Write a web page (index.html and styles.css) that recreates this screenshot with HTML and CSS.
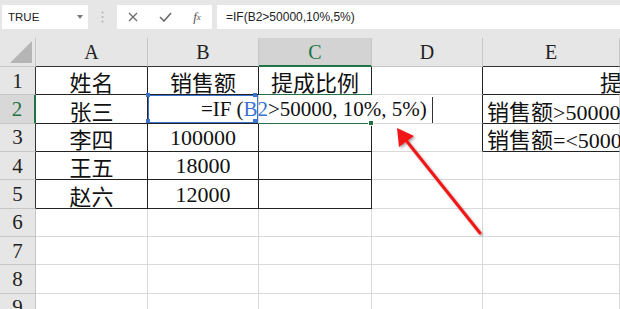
FILE: index.html
```html
<!DOCTYPE html>
<html lang="zh-CN">
<head>
    <meta charset="UTF-8">
    <title>提成比例</title>
    <link rel="stylesheet" href="styles.css">
</head>
<body>
<div class="app">
    <div class="toolbar">
        <div class="namebox">
            <span>TRUE</span>
            <span class="caret"></span>
        </div>
        <div class="grip">
            <svg width="3" height="12" viewBox="0 0 3 12"><circle cx="1.5" cy="1.5" r="1" fill="#b0b0b0"/><circle cx="1.5" cy="6" r="1" fill="#b0b0b0"/><circle cx="1.5" cy="10.5" r="1" fill="#b0b0b0"/></svg>
        </div>
        <div class="buttons">
            <span class="btn cancel">
                <svg width="10" height="10" viewBox="0 0 10 10"><path d="M1 1 L9 9 M9 1 L1 9" stroke="#6a6a6a" stroke-width="1.3"/></svg>
            </span>
            <span class="btn enter">
                <svg width="13" height="10" viewBox="0 0 13 10"><path d="M1 5 L5 9 L12 1" fill="none" stroke="#6a6a6a" stroke-width="1.6"/></svg>
            </span>
            <span class="btn fx">f<sub>x</sub></span>
        </div>
        <div class="formula">=IF(B2&gt;50000,10%,5%)</div>
    </div>

    <div class="sheet">
        <div class="cell corner"></div>
        <div class="cell col-head dark-bottom">A</div>
        <div class="cell col-head dark-bottom">B</div>
        <div class="cell col-head active">C</div>
        <div class="cell col-head">D</div>
        <div class="cell col-head dark-bottom">E</div>

        <div class="cell row-head dark-right">1</div>
        <div class="cell boxed">姓名</div>
        <div class="cell boxed">销售额</div>
        <div class="cell boxed green-bottom">提成比例</div>
        <div class="cell dark-right"></div>
        <div class="cell boxed-row title">提</div>

        <div class="cell row-head active-row">2</div>
        <div class="cell boxed">张三</div>
        <div class="cell range"></div>
        <div class="cell current"></div>
        <div class="cell dark-right"></div>
        <div class="cell boxed-row left">销售额&gt;50000</div>

        <div class="cell row-head dark-right">3</div>
        <div class="cell boxed">李四</div>
        <div class="cell boxed">100000</div>
        <div class="cell boxed"></div>
        <div class="cell dark-right"></div>
        <div class="cell boxed-row left">销售额=&lt;50000</div>

        <div class="cell row-head dark-right">4</div>
        <div class="cell boxed">王五</div>
        <div class="cell boxed">18000</div>
        <div class="cell boxed"></div>
        <div class="cell"></div>
        <div class="cell"></div>

        <div class="cell row-head dark-right">5</div>
        <div class="cell boxed">赵六</div>
        <div class="cell boxed">12000</div>
        <div class="cell boxed"></div>
        <div class="cell"></div>
        <div class="cell"></div>

        <div class="cell row-head">6</div>
        <div class="cell"></div><div class="cell"></div><div class="cell"></div><div class="cell"></div><div class="cell"></div>
        <div class="cell row-head">7</div>
        <div class="cell"></div><div class="cell"></div><div class="cell"></div><div class="cell"></div><div class="cell"></div>
        <div class="cell row-head">8</div>
        <div class="cell"></div><div class="cell"></div><div class="cell"></div><div class="cell"></div><div class="cell"></div>
        <div class="cell row-head">9</div>
        <div class="cell"></div><div class="cell"></div><div class="cell"></div><div class="cell"></div><div class="cell"></div>
    </div>

    <div class="editor">=IF<span class="paren">(</span><span class="ref">B2</span>&gt;50000, 10%, 5%)</div>

    <svg class="arrow" width="620" height="309" viewBox="0 0 620 309">
        <defs>
            <filter id="shadow" x="-20%" y="-20%" width="140%" height="140%">
                <feDropShadow dx="1.5" dy="1.5" stdDeviation="1.2" flood-color="#000" flood-opacity="0.35"/>
            </filter>
        </defs>
        <g filter="url(#shadow)">
            <line x1="480" y1="233" x2="405" y2="139" stroke="#f01818" stroke-width="3" stroke-linecap="round"/>
            <polygon points="397,128 399,147 414,136" fill="#f01818"/>
        </g>
    </svg>
</div>
</body>
</html>
```

FILE: styles.css
```css
body {
    margin: 0;
    background: #fff;
    font-family: "Liberation Serif", "Noto Sans CJK SC", serif;
    overflow: hidden;
}

.app {
    position: relative;
    width: 620px;
    height: 309px;
    overflow: hidden;
}

/* formula bar */
.toolbar {
    height: 38px;
    box-sizing: border-box;
    padding-top: 5px;
    background: #e6e6e6;
    display: flex;
    align-items: flex-start;
    font-family: "Liberation Sans", Arial, sans-serif;
}

.namebox {
    margin-left: 2px;
    width: 86px;
    height: 24px;
    box-sizing: border-box;
    padding: 0 5px 0 6px;
    background: #fff;
    display: flex;
    align-items: center;
    justify-content: space-between;
    font-size: 11.5px;
    color: #222;
}

.caret {
    width: 0;
    height: 0;
    border-left: 3px solid transparent;
    border-right: 3px solid transparent;
    border-top: 4px solid #777;
}

.grip {
    width: 29px;
    height: 24px;
    display: flex;
    align-items: center;
    justify-content: center;
}

.buttons {
    width: 95px;
    height: 24px;
    background: #fff;
    display: flex;
    align-items: center;
}

.btn {
    display: flex;
    justify-content: center;
    align-items: center;
}

.btn.cancel {
    width: 32px;
}

.btn.enter {
    width: 33px;
}

.btn.fx {
    width: 30px;
    font-family: "Liberation Serif", serif;
    font-style: italic;
    font-size: 13px;
    color: #555;
}

.btn.fx sub {
    font-size: 9px;
    vertical-align: -1px;
}

.formula {
    margin-left: 5px;
    flex: 1;
    height: 24px;
    box-sizing: border-box;
    padding-left: 9px;
    background: #fff;
    display: flex;
    align-items: center;
    font-size: 12px;
    color: #222;
}

/* grid */
.sheet {
    display: grid;
    grid-template-columns: 36px 112px 111px 113px 111px 1fr;
    grid-template-rows: 29px repeat(9, 28.35px);
}

.cell {
    box-sizing: border-box;
    border-right: 1px solid #d9d9d9;
    border-bottom: 1px solid #d9d9d9;
    display: flex;
    align-items: center;
    justify-content: center;
    white-space: nowrap;
    min-width: 0;
    font-size: 22px;
    color: #111;
    padding-top: 1px;
}

.corner {
    position: relative;
    background: #e6e6e6;
    border-color: #c6c6c6;
}

.corner::after {
    content: "";
    position: absolute;
    right: 3px;
    bottom: 3px;
    width: 0;
    height: 0;
    border-left: 22px solid transparent;
    border-bottom: 22px solid #b5b5b5;
}

.col-head {
    background: #e6e6e6;
    border-right-color: #c6c6c6;
    border-bottom-color: #c6c6c6;
    font-size: 20px;
    color: #222;
}

.col-head.dark-bottom {
    border-bottom-color: #333;
}

.col-head.active {
    background: #d3d3d3;
    color: #217346;
    border-bottom: 2px solid #217346;
}

.row-head {
    background: #e6e6e6;
    border-right-color: #c6c6c6;
    border-bottom-color: #c6c6c6;
    font-size: 21px;
    color: #222;
}

.row-head.dark-right {
    border-right-color: #333;
}

.row-head.active-row {
    background: #d8d8d8;
    color: #217346;
    border-right: 2px solid #217346;
}

.boxed {
    border-right-color: #222;
    border-bottom-color: #222;
}

.dark-right {
    border-right-color: #222;
}

.boxed-row {
    border-bottom-color: #222;
}

.title {
    justify-content: flex-start;
    padding-left: 117px;
}

.left {
    justify-content: flex-start;
    padding-left: 4px;
}

.green-bottom {
    border-bottom: 1px solid #217346;
}

.range {
    position: relative;
    border-bottom-color: #222;
    box-shadow: inset 0 0 0 1px #3a73d0;
}

.range::before {
    content: "";
    position: absolute;
    left: -2px;
    top: -2px;
    width: 4px;
    height: 4px;
    background: #3a73d0;
    box-shadow: 107px 0 #3a73d0, 0 26px #3a73d0, 107px 26px #3a73d0;
}

.current {
    position: relative;
    border-right-color: transparent;
    border-bottom: 1px solid #217346;
}

.current::after {
    content: "";
    position: absolute;
    right: -3px;
    bottom: -3px;
    width: 4px;
    height: 4px;
    background: #217346;
    border: 1px solid #fff;
}

/* in-cell editing text */
.editor {
    position: absolute;
    left: 201px;
    top: 96px;
    height: 27px;
    display: flex;
    align-items: center;
    font-size: 21px;
    color: #111;
    white-space: pre;
}

.editor::after {
    content: "";
    width: 1px;
    height: 26px;
    margin-left: 5px;
    background: #333;
}

.paren {
    margin-left: 5px;
}

.ref {
    color: #3a73d0;
}

.arrow {
    position: absolute;
    left: 0;
    top: 0;
    pointer-events: none;
}
```
